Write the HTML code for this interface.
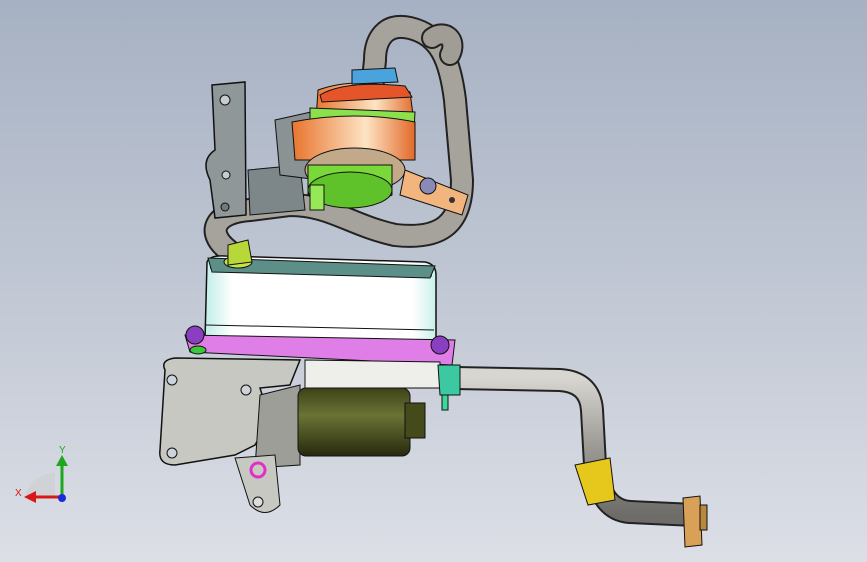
<!DOCTYPE html>
<html><head><meta charset="utf-8"><style>
html,body{margin:0;padding:0;width:867px;height:562px;overflow:hidden}
body{background:linear-gradient(#a6b1c3 0%,#c3c9d5 55%,#dcdfe6 100%)}
svg{position:absolute;left:0;top:0}
</style></head><body>
<svg width="867" height="562" viewBox="0 0 867 562" xmlns="http://www.w3.org/2000/svg">
<defs>
<linearGradient id="pipe" x1="0" y1="0" x2="0" y2="1"><stop offset="0" stop-color="#d8d6d0"/><stop offset="0.5" stop-color="#9c9a94"/><stop offset="1" stop-color="#6e6c68"/></linearGradient>
<linearGradient id="olive" x1="0" y1="0" x2="0" y2="1"><stop offset="0" stop-color="#3d4217"/><stop offset="0.4" stop-color="#6b7336"/><stop offset="1" stop-color="#262a0c"/></linearGradient>
<linearGradient id="cool" x1="0" y1="0" x2="1" y2="0"><stop offset="0" stop-color="#bfeee8"/><stop offset="0.12" stop-color="#ffffff"/><stop offset="0.9" stop-color="#ffffff"/><stop offset="1" stop-color="#c8f0ea"/></linearGradient>
<linearGradient id="orng" x1="0" y1="0" x2="1" y2="0"><stop offset="0" stop-color="#e8742e"/><stop offset="0.6" stop-color="#fde4c4"/><stop offset="1" stop-color="#e26a2a"/></linearGradient>
</defs>
<g fill="none" stroke-linecap="round">
<path d="M228 250 C205 232 215 212 250 210 L290 205 C330 205 350 225 395 235 C440 240 462 225 462 180 L455 100 C450 60 440 35 410 28 C385 22 375 40 375 60 L372 90" stroke="#222" stroke-width="24"/>
<path d="M228 250 C205 232 215 212 250 210 L290 205 C330 205 350 225 395 235 C440 240 462 225 462 180 L455 100 C450 60 440 35 410 28 C385 22 375 40 375 60 L372 90" stroke="#a6a39c" stroke-width="20"/>
<path d="M432 38 C445 28 458 40 450 55" stroke="#222" stroke-width="22"/>
<path d="M432 38 C445 28 458 40 450 55" stroke="#a09d96" stroke-width="18"/>
</g>
<path d="M212 85 L245 82 L246 215 L215 218 L210 180 Q200 160 215 150 Z" fill="#8f9799" stroke="#111" stroke-width="1.5"/>
<circle cx="225" cy="100" r="5" fill="#c9cccf" stroke="#111"/><circle cx="226" cy="175" r="4" fill="#c9cccf" stroke="#111"/><circle cx="225" cy="207" r="4" fill="#777" stroke="#111"/>
<path d="M248 170 L300 165 L305 210 L250 215 Z" fill="#7d8789" stroke="#111"/>
<path d="M275 120 L320 110 L320 180 L280 175 Z" fill="#8a9294" stroke="#111"/>
<path d="M318 90 Q360 75 410 92 L415 130 L315 135 Z" fill="url(#orng)" stroke="#111"/>
<path d="M320 95 Q345 80 405 86 L412 97 L322 102 Z" fill="#e4562a" stroke="#111"/>
<path d="M310 108 L415 112 L413 150 L310 145 Z" fill="#8be04d" stroke="#111"/>
<path d="M292 122 Q355 110 415 122 L415 160 L295 160 Z" fill="url(#orng)" stroke="#111"/>
<ellipse cx="355" cy="170" rx="50" ry="22" fill="#c2a98a" stroke="#111"/>
<path d="M308 165 L392 165 L392 195 Q350 215 308 195 Z" fill="#7ad838" stroke="#111"/>
<ellipse cx="350" cy="190" rx="42" ry="18" fill="#5fc22a" stroke="#111"/>
<rect x="310" y="185" width="14" height="25" fill="#96e857" stroke="#111"/>
<path d="M405 170 L468 195 L462 215 L400 195 Z" fill="#f3b57e" stroke="#111"/>
<circle cx="428" cy="186" r="8" fill="#8a8ab8" stroke="#111"/><circle cx="452" cy="200" r="3" fill="#333"/>
<path d="M352 70 L395 68 L398 82 L352 84 Z" fill="#4aa3dd" stroke="#111"/>
<path d="M207 262 Q210 255 225 256 L425 262 Q436 264 436 275 L436 340 L205 340 Z" fill="url(#cool)" stroke="#111" stroke-width="1.5"/>
<path d="M210 268 L432 276" stroke="#111" fill="none"/><path d="M206 325 L434 330" stroke="#111"/>
<path d="M208 258 L435 266 L430 278 L212 272 Z" fill="#5c8f87" stroke="#111"/>
<ellipse cx="238" cy="262" rx="14" ry="6" fill="#c6e44a" stroke="#111"/>
<path d="M228 245 L248 240 L252 262 L228 265 Z" fill="#b8d83a" stroke="#111"/>
<path d="M185 335 L455 340 L452 365 L190 352 Z" fill="#e07ee8" stroke="#111"/>
<circle cx="195" cy="335" r="9" fill="#8a3ec0" stroke="#111"/><circle cx="440" cy="345" r="9" fill="#8a3ec0" stroke="#111"/>
<ellipse cx="198" cy="350" rx="8" ry="4" fill="#38c838" stroke="#111"/>
<path d="M305 360 L440 362 L440 388 L305 388 Z" fill="#eeeeea" stroke="#111"/>
<path d="M165 370 Q160 360 175 358 L300 360 L290 385 L260 388 L270 420 L255 445 L235 455 L175 465 Q158 465 160 450 Z" fill="#c8c8c2" stroke="#111" stroke-width="1.5"/>
<circle cx="172" cy="380" r="5" fill="#cdd3dc" stroke="#111"/><circle cx="246" cy="390" r="5" fill="#cdd3dc" stroke="#111"/><circle cx="172" cy="453" r="5" fill="#cdd3dc" stroke="#111"/>
<path d="M260 395 L300 385 L300 465 L255 468 Z" fill="#9e9e98" stroke="#111"/>
<path d="M235 458 L275 455 L280 505 Q265 520 250 505 Z" fill="#c8c8c2" stroke="#111"/>
<circle cx="258" cy="470" r="7" fill="none" stroke="#e030c8" stroke-width="3"/><circle cx="258" cy="502" r="5" fill="#ddd" stroke="#111"/>
<rect x="298" y="388" width="112" height="68" rx="8" fill="url(#olive)" stroke="#111"/>
<rect x="405" y="403" width="20" height="35" fill="#454a1a" stroke="#111"/>
<g fill="none">
<path d="M455 378 L560 380 Q590 382 592 410 L595 465 Q600 510 630 512 L695 515" stroke="#222" stroke-width="24"/>
<path d="M455 378 L560 380 Q590 382 592 410 L595 465 Q600 510 630 512 L695 515" stroke="url(#pipe)" stroke-width="20"/>
</g>
<path d="M575 465 L610 458 L615 500 L588 505 Z" fill="#e6c81c" stroke="#111"/>
<path d="M438 365 L460 365 L460 395 L440 395 Z" fill="#3cc8a0" stroke="#111"/>
<rect x="442" y="395" width="6" height="15" fill="#3cd89a" stroke="#111"/>
<path d="M683 498 L700 496 L702 545 L685 547 Z" fill="#d9a058" stroke="#111"/>
<rect x="700" y="505" width="7" height="25" fill="#b88840" stroke="#111"/>
<path d="M25 497 Q30 475 55 472 L55 497 Z" fill="#d0d2d6"/>
<line x1="62" y1="497" x2="62" y2="462" stroke="#1fa81f" stroke-width="3"/>
<path d="M56 466 L62 455 L68 466 Z" fill="#1fa81f"/>
<line x1="62" y1="497" x2="32" y2="497" stroke="#d81818" stroke-width="3"/>
<path d="M36 491 L24 497 L36 503 Z" fill="#d81818"/>
<circle cx="62" cy="498" r="4" fill="#1a2ad8"/>
<text x="59" y="453" font-family="Liberation Sans, sans-serif" font-size="10" fill="#1fa81f">Y</text>
<text x="15" y="496" font-family="Liberation Sans, sans-serif" font-size="10" fill="#d81818">X</text>
</svg>
</body></html>
